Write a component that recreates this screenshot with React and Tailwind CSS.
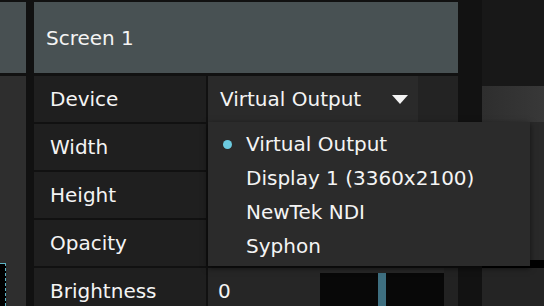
const ITEMS = ["Virtual Output", "Display 1 (3360x2100)", "NewTek NDI", "Syphon"];

const Row = ({ label, children }) => (
  <div className="flex shrink-0 h-[46px] mb-[2px] gap-[2px]">
    <div className="w-[172px] bg-[#1f1f1f] pl-[16px] flex items-center">{label}</div>
    <div className="flex-1 flex bg-[#262626]">{children}</div>
  </div>
);

export default function App() {
  return (
    <div
      className="w-[544px] h-[306px] bg-[#111111] overflow-hidden flex relative text-[20px] text-[#f4f4f4] leading-none"
      style={{ fontFamily: '"DejaVu Sans", sans-serif' }}
    >
      {/* left strip */}
      <div className="w-[26px] shrink-0 flex flex-col">
        <div className="h-[71px] shrink-0 mt-[2px] bg-[#485052]" />
        <div className="flex-1 mt-[3px] bg-[#2e2e2e] flex flex-col">
          <div className="mt-auto h-[43px] w-[6px] bg-black border-r border-t border-dashed border-[#5fb3c4]" />
        </div>
      </div>

      {/* main panel */}
      <div className="w-[424px] shrink-0 ml-[8px] flex flex-col overflow-hidden">
        <div className="h-[71px] shrink-0 mt-[2px] bg-[#485153] pl-[12px] flex items-center">Screen 1</div>
        <div className="mt-[3px] shrink-0 flex flex-col">
          <Row label="Device">
            <div className="w-[210px] bg-[#2a2a2a] pl-[12px] pr-[10px] flex items-center">
              <span>Virtual Output</span>
              <svg className="ml-auto" width="16" height="9" viewBox="0 0 16 9">
                <path d="M0 0 H16 L8 9 Z" fill="#f4f4f4" />
              </svg>
            </div>
            <div className="flex-1 bg-[#232323]" />
          </Row>
          <Row label="Width" />
          <Row label="Height" />
          <Row label="Opacity" />
          <Row label="Brightness">
            <div className="w-[112px] pl-[10px] flex items-center">0</div>
            <div className="w-[124px] mt-[5px] h-[41px] bg-[#080808] pl-[58px]">
              <div className="w-[8px] h-full bg-[#3e6f80]" />
            </div>
            <div className="flex-1 bg-[#222222]" />
          </Row>
        </div>
      </div>

      {/* right side */}
      <div className="w-[24px] shrink-0 bg-[#121212]" />
      <div className="flex-1 flex flex-col">
        <div className="h-[86px] shrink-0 bg-[#181818]" />
        <div className="h-[36px] shrink-0 bg-gradient-to-r from-[#2e2e2e] to-[#383838]" />
        <div className="h-[138px] shrink-0 bg-[#292929]" />
        <div className="h-[8px] shrink-0 bg-black" />
        <div className="flex-1 bg-[#242424]" />
      </div>

      {/* dropdown menu */}
      <div className="absolute left-[208px] top-[122px] w-[322px] h-[144px] bg-[#2b2b2b] pt-[5px] shadow-[0_2px_6px_rgba(0,0,0,0.6)]">
        {ITEMS.map((item, i) => (
          <div key={item} className="h-[34px] flex items-center">
            <div className="w-[38px] flex justify-center pl-[1px]">
              {i === 0 && <div className="w-[9px] h-[9px] rounded-full bg-[#6ccbe0]" />}
            </div>
            <span>{item}</span>
          </div>
        ))}
      </div>
    </div>
  );
}
